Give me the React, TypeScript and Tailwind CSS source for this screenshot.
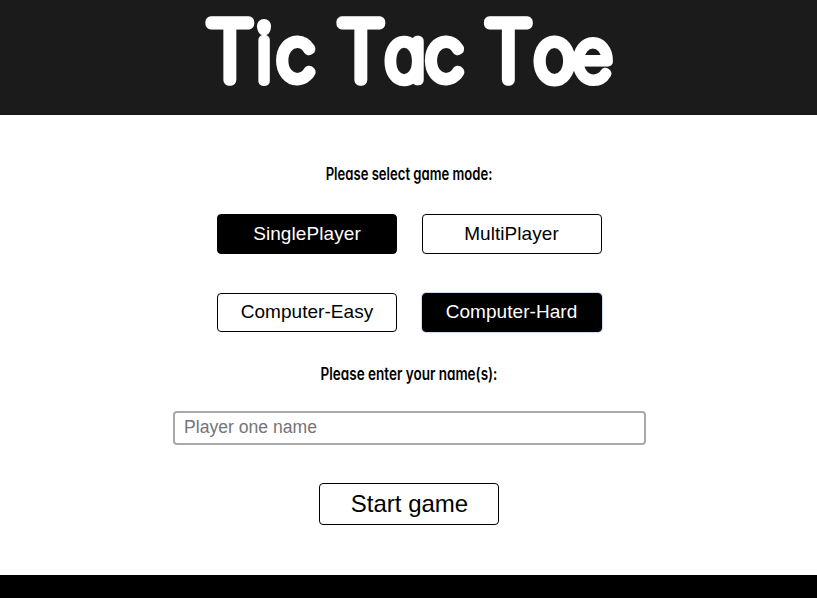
type ModeButtonProps = { label: string; className: string };

function ModeButton({ label, className }: ModeButtonProps) {
  return (
    <button
      className={`flex w-[180px] items-center justify-center rounded-[4px] border border-black pb-[2px] font-['Liberation_Sans',Arial,sans-serif] text-[19px] leading-none ${className}`}
    >
      {label}
    </button>
  );
}

function Prompt({ text, className }: { text: string; className: string }) {
  return (
    <h2
      className={`origin-center text-center font-['Inter',sans-serif] text-[17px] font-semibold leading-[22px] whitespace-nowrap [font-feature-settings:'cv11'] ${className}`}
    >
      {text}
    </h2>
  );
}

/* Wordmark: thin letters under a heavy round-jointed stroke. */
function Logo() {
  return (
    <svg
      width="817"
      height="115"
      viewBox="0 0 817 115"
      role="img"
      aria-label="Tic Tac Toe"
      className="block shrink-0"
    >
      <g transform="scale(0.97 1)">
        <text
          y="80.5"
          strokeWidth="11"
          strokeLinejoin="round"
          strokeLinecap="round"
          className="fill-white stroke-white font-['Inter',sans-serif] text-[72px] font-thin [font-feature-settings:'cv11']"
        >
          <tspan x="212.6" y="80.4" className="text-[79px]" strokeWidth="11.5">T</tspan>
          <tspan x="264.2" y="80.9" className="text-[75px]" strokeWidth="10">i</tspan>
          <tspan x="285.6" y="80.4">c</tspan>{" "}
          <tspan x="347.6" y="80.4" className="text-[79px]" strokeWidth="11.5">T</tspan>
          <tspan x="397.2" y="80.4" className="text-[71px]" strokeWidth="10.5">a</tspan>
          <tspan x="438.9" y="80.4">c</tspan>{" "}
          <tspan x="499.7" y="80.4" className="text-[79px]" strokeWidth="11.5">T</tspan>
          <tspan x="551" y="80.4" className="text-[71px]">o</tspan>
          <tspan x="591" y="80.4" className="text-[70px]" strokeWidth="10">e</tspan>
        </text>
      </g>
      <circle cx="264" cy="26" r="7.1" className="fill-white" />
    </svg>
  );
}

export default function App() {
  return (
    <div className="flex h-[598px] w-full flex-col overflow-hidden bg-white text-black">
      <header className="flex h-[115px] shrink-0 justify-center bg-[#1b1b1b]">
        <Logo />
      </header>
      <main className="flex h-[460px] shrink-0 flex-col items-center">
        <Prompt text="Please select game mode:" className="mt-[48px] scale-x-[0.77] pl-[2px]" />
        <div className="mt-[29px] flex gap-[25px] pl-[2px]">
          <ModeButton label="SinglePlayer" className="h-10 bg-black tracking-[0.08px] text-white" />
          <ModeButton label="MultiPlayer" className="h-10 pr-px tracking-[0.05px]" />
        </div>
        <div className="mt-[39px] flex gap-[25px] pl-[2px]">
          <ModeButton label="Computer-Easy" className="h-[39px] tracking-[0.05px]" />
          <ModeButton
            label="Computer-Hard"
            className="h-[39px] border-[#536080] bg-black pr-px tracking-[0.05px] text-white shadow-[0_0_1px_1px_#c7d8f8]"
          />
        </div>
        <Prompt text="Please enter your name(s):" className="mt-[31px] scale-x-[0.795] pl-[2px]" />
        <input
          placeholder="Player one name"
          className="mt-[26px] ml-[2px] h-[34px] w-[473px] rounded-[4px] border-2 border-[#a9a9a9] px-[9px] pb-[2px] font-['Liberation_Sans',Arial,sans-serif] text-[17.6px] placeholder:text-[#757575]"
        />
        <button className="mt-[38px] flex h-[42px] w-[180px] items-center justify-center rounded-[4px] border border-black pl-[2px] font-['Liberation_Sans',Arial,sans-serif] text-[24px] leading-none">
          Start game
        </button>
      </main>
      <footer className="h-[23px] shrink-0 bg-black" />
    </div>
  );
}
